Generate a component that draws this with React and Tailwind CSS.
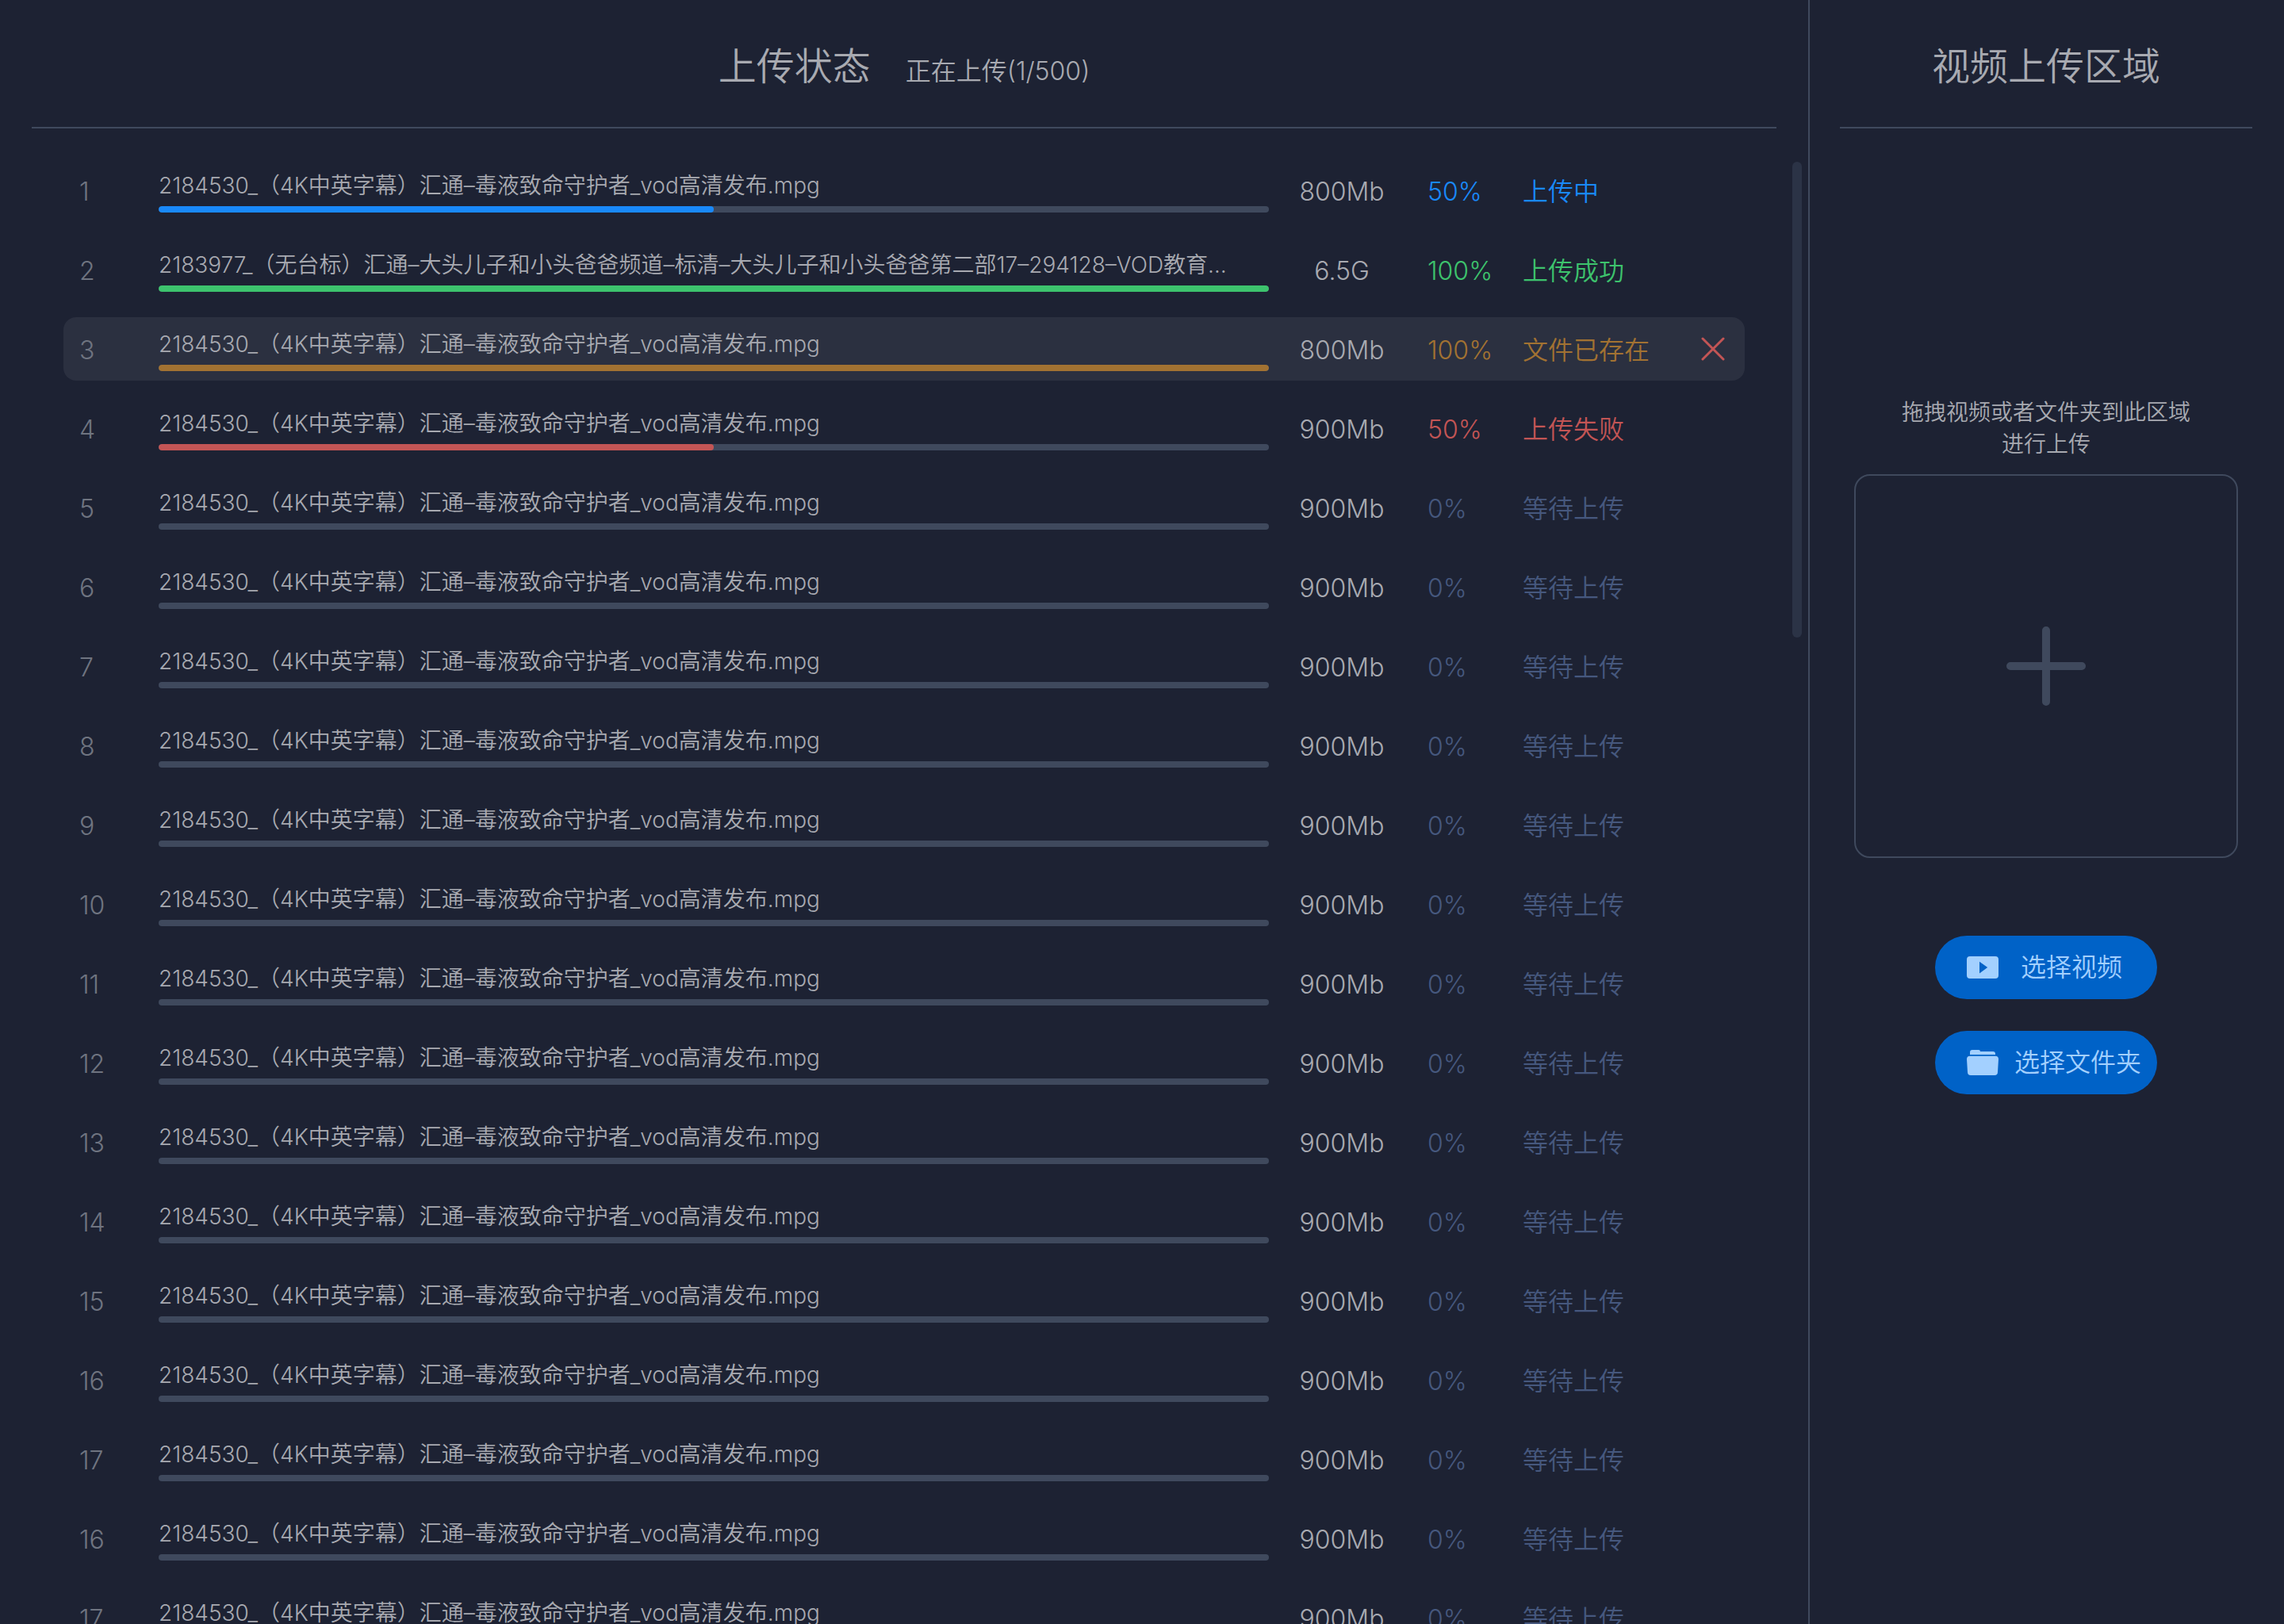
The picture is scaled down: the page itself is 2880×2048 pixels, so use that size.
import React from "react";

const FILE = "2184530_（4K中英字幕）汇通–毒液致命守护者_vod高清发布.mpg";
const LONG_FILE =
  "2183977_（无台标）汇通–大头儿子和小头爸爸频道–标清–大头儿子和小头爸爸第二部17–294128–VOD教育…";

const TONES = {
  active: { text: "text-[#1989fa]", bar: "bg-[#1989fa]" },
  done: { text: "text-[#3dc36d]", bar: "bg-[#3dc36d]" },
  exists: { text: "text-[#a27232]", bar: "bg-[#a27232]" },
  failed: { text: "text-[#c35555]", bar: "bg-[#c35555]" },
  waiting: { text: "text-[#46587e]", bar: "bg-[#3f495d]" },
};

const waiting = (no) => ({ no, name: FILE, size: "900Mb", percent: 0, status: "等待上传", tone: "waiting" });

const ROWS = [
  { no: 1, name: FILE, size: "800Mb", percent: 50, status: "上传中", tone: "active" },
  { no: 2, name: LONG_FILE, size: "6.5G", percent: 100, status: "上传成功", tone: "done" },
  { no: 3, name: FILE, size: "800Mb", percent: 100, status: "文件已存在", tone: "exists", selected: true },
  { no: 4, name: FILE, size: "900Mb", percent: 50, status: "上传失败", tone: "failed" },
  ...[5, 6, 7, 8, 9, 10, 11, 12, 13, 14, 15, 16, 17, 16, 17].map(waiting),
];

function CloseIcon() {
  return (
    <svg viewBox="0 0 30 30" className="size-[30px]" fill="none" stroke="currentColor" strokeWidth="3" strokeLinecap="round">
      <path d="M2 2 28 28M28 2 2 28" />
    </svg>
  );
}

function VideoIcon() {
  return (
    <svg viewBox="0 0 40 28" className="h-7 w-10 shrink-0" fill="currentColor" fillRule="evenodd">
      <path d="M4 0h32a4 4 0 0 1 4 4v20a4 4 0 0 1-4 4H4a4 4 0 0 1-4-4V4a4 4 0 0 1 4-4ZM16 6.7v14.8L26.2 14.1Z" />
    </svg>
  );
}

function FolderIcon() {
  return (
    <svg viewBox="0 0 40 32" className="h-8 w-10 shrink-0" fill="currentColor">
      <path d="M4 6V3a3 3 0 0 1 3-3h8a2 2 0 0 1 2 2h16a3 3 0 0 1 3 3v1Z" />
      <path d="M4 7.8h32a4 4 0 0 1 4 4L39 28a4 4 0 0 1-4 4H5a4 4 0 0 1-4-4L0 11.800a4 4 0 0 1 4-4Z" />
    </svg>
  );
}

function PlusIcon() {
  return (
    <svg viewBox="0 0 100 100" className="size-[100px]" fill="none" stroke="currentColor" strokeWidth="10" strokeLinecap="round">
      <path d="M50 5v90M5 50h90" />
    </svg>
  );
}

function UploadRow({ row }) {
  const tone = TONES[row.tone];
  const bg = row.selected ? "bg-[#2b3040]" : "";
  return (
    <tr className="h-20">
      <td className={`rounded-l-2xl pt-1 pl-5 text-[#6f7480] ${bg}`}>{row.no}</td>
      <td className={`align-top pt-3.5 ${bg}`}>
        <p className="truncate text-[28px] leading-10">{row.name}</p>
        <div
          role="progressbar"
          aria-label={row.name}
          aria-valuenow={row.percent}
          aria-valuemin={0}
          aria-valuemax={100}
          className="mt-1.5 h-2 overflow-hidden rounded-full bg-[#3f495d]"
        >
          <div className={`h-full rounded-full ${tone.bar}`} style={{ width: `${row.percent}%` }} />
        </div>
      </td>
      <td className={`pt-1 text-center ${bg}`}>{row.size}</td>
      <td className={`pt-1 pl-4 ${tone.text} ${bg}`}>{row.percent}%</td>
      <td className={`pt-1 ${tone.text} ${bg}`}>{row.status}</td>
      <td className={`rounded-r-2xl ${bg}`}>
        {row.selected && (
          <button type="button" aria-label="移除" className="mx-auto block text-[#c35555]">
            <CloseIcon />
          </button>
        )}
      </td>
    </tr>
  );
}

function ActionButton({ icon, label, gap }) {
  return (
    <button type="button" className={`flex h-20 w-[280px] items-center rounded-full bg-[#0062c7] pl-10 text-[32px] text-[#a3d0ff] ${gap}`}>
      {icon}
      <span className="whitespace-nowrap">{label}</span>
    </button>
  );
}

export default function App() {
  return (
    <div className="flex h-screen overflow-hidden bg-[#1d2233] font-['Inter','Noto_Sans_CJK_SC',sans-serif] font-[350] text-[#a8aab1]">
      <main className="flex min-w-0 flex-1 flex-col">
        <header className="mx-10 flex h-[162px] shrink-0 items-baseline justify-center gap-11 border-b-2 border-[#3f495d] pt-12">
          <h1 className="text-[48px] leading-[72px] font-[350]">上传状态</h1>
          <p className="text-[32px] leading-[48px]">正在上传(1/500)</p>
        </header>
        <div className="flex min-h-0 flex-1 overflow-hidden pt-[18px]">
          <div className="min-w-0 flex-1 pr-[60px] pl-20">
            <table className="w-full table-fixed border-separate border-spacing-x-0 border-spacing-y-5 text-[32px] leading-[48px]">
              <colgroup>
                <col className="w-[120px]" />
                <col />
                <col className="w-[184px]" />
                <col className="w-[136px]" />
                <col className="w-[200px]" />
                <col className="w-20" />
              </colgroup>
              <tbody>
                {ROWS.map((row, i) => (
                  <UploadRow key={i} row={row} />
                ))}
              </tbody>
            </table>
          </div>
          <div className="mt-6 mr-2 h-[600px] w-3 shrink-0 rounded-full bg-[#2b3346]" />
        </div>
      </main>

      <aside className="flex w-[600px] shrink-0 flex-col border-l-2 border-[#3f495d] pr-10 pl-[38px]">
        <header className="flex h-[162px] shrink-0 justify-center border-b-2 border-[#3f495d] pt-12">
          <h2 className="text-[48px] leading-[72px] font-[350]">视频上传区域</h2>
        </header>
        <div className="flex flex-col items-center pt-[338px]">
          <p className="text-center text-[28px] leading-10">
            拖拽视频或者文件夹到此区域
            <br />
            进行上传
          </p>
          <button
            type="button"
            aria-label="添加视频"
            className="mt-[18px] flex size-[484px] items-center justify-center rounded-[20px] border-2 border-[#3f495d] text-[#3f495d]"
          >
            <PlusIcon />
          </button>
          <div className="mt-[98px] flex flex-col gap-10">
            <ActionButton icon={<VideoIcon />} label="选择视频" gap="gap-7" />
            <ActionButton icon={<FolderIcon />} label="选择文件夹" gap="gap-5" />
          </div>
        </div>
      </aside>
    </div>
  );
}
